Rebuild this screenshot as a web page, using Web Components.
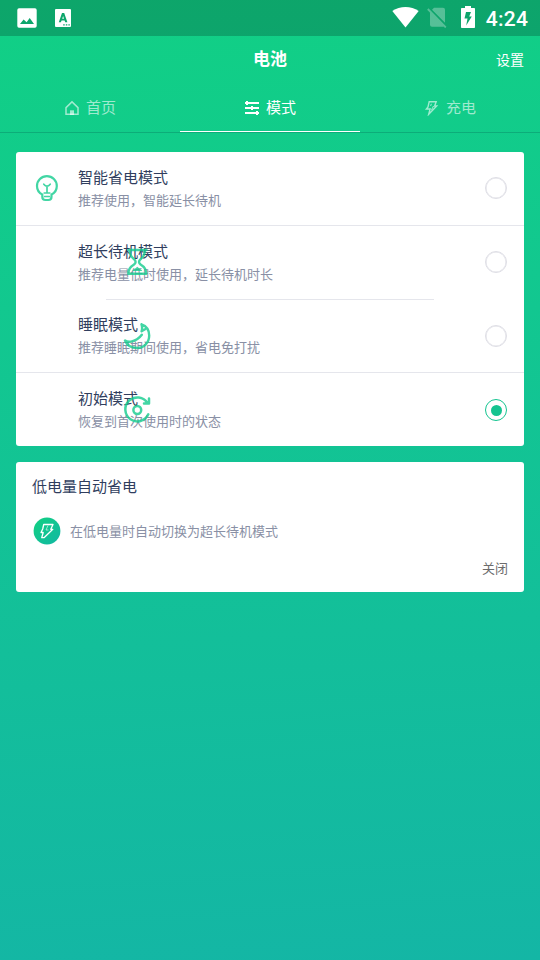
<!DOCTYPE html>
<html lang="zh-CN">
<head>
<meta charset="utf-8">
<title>电池</title>
<style>
html,body{margin:0;height:100%}
body{font-family:Roboto,"Noto Sans CJK SC",sans-serif;overflow:hidden}
</style>
</head>
<body>
<battery-app></battery-app>
<script>
const define = (name, html, setup) => customElements.define(name, class extends HTMLElement {
  static observedAttributes = ['name'];
  constructor() {
    super();
    const t = document.createElement('template');
    t.innerHTML = html;
    this.attachShadow({mode: 'open'}).append(t.content.cloneNode(true));
  }
  connectedCallback() { if (setup) setup(this, this.shadowRoot); }
  attributeChangedCallback() { if (setup) setup(this, this.shadowRoot); }
});

const stroke = (body, w = 2.4) => `<g fill="none" stroke="currentColor" stroke-width="${w}" stroke-linejoin="round" stroke-linecap="round">${body}</g>`;
const icons = {
  picture: [20, 20, '<path fill="currentColor" fill-rule="evenodd" d="M2 .3h16a1.8 1.8 0 0 1 1.700 1.700v16a1.800 1.800 0 0 1-1.700 1.700H2A1.800 1.800 0 0 1 .3 18V2A1.800 1.800 0 0 1 2 .3zM3 16h14l-4.300-6-3.100 4.200-3-2.700z"/>'],
  letter: [16, 18, '<path fill="currentColor" fill-rule="evenodd" d="M1 0h14a1 1 0 0 1 1 1v16a1 1 0 0 1-1 1H1a1 1 0 0 1-1-1V1a1 1 0 0 1 1-1zM3.800 13.300h2.100l.7-1.800h3l.7 1.800h2.100L9.200 4H7zM7.200 9.700 8.100 7 9 9.700zM8.200 15.300v1.300h1.500v-1.300zm2.600 0v1.300h1.500v-1.300zm2.600 0v1.300h1.400v-1.300z"/>'],
  wifi: [27, 21, '<path fill="currentColor" d="M.3 4C8-1.300 19-1.300 26.700 4L13.500 20.500z"/>'],
  nosim: [20, 21, '<g opacity=".3"><path fill="#fff" d="M7 .8h9a2 2 0 0 1 2 2v13L5 2.800zM3 4.800l14 14.500a2 2 0 0 1-1 .5H5a2 2 0 0 1-2-2z"/><path d="M.8 2 18.800 20.500" stroke="#fff" stroke-width="1.800"/></g>'],
  battery: [14, 22, '<path fill="currentColor" fill-rule="evenodd" d="M4 0h6v2h3.200q.8 0 .8.800v18.400q0 .8-.8.800H.8q-.8 0-.8-.8V2.800q0-.8.8-.8H4zM5 6 3.500 12.500h3L5.200 19.500 10.800 10.500H8.200L10 6z"/>'],
  home: [16, 16, '<path d="M2 14.300V7.600L8 1.900l6 5.700v6.700z" fill="none" stroke="currentColor" stroke-width="1.500"/><path d="M6 15v-4.700h4V15z" fill="currentColor"/>'],
  sliders: [16, 16, '<path d="M1 3h14M1 8h14M1 13h14" fill="none" stroke="currentColor" stroke-width="1.800"/><path d="M3 .9v4.200M8 5.900v4.200M13 10.900v4.200" stroke="currentColor" stroke-width="2"/>'],
  bolt: [16, 16, '<path d="M5.200 1.700h7L10.600 6h2.100L4.700 14.300 6.100 9H2.400L4 7z" fill="none" stroke="currentColor" stroke-width="1.400"/><path d="M7.400 3.800 6.600 6M9.500 6 7.500 10" stroke="currentColor" stroke-width="1"/>'],
  bulb: [32, 32, stroke('<path d="M11.300 22.500C7.800 20.800 6 17.800 6 14a9.900 9.900 0 0 1 19.800 0c0 3.800-1.800 6.800-5.300 8.500v2.200q0 3.300-3.200 3.300h-2.800q-3.200 0-3.200-3.300z"/><path d="M12.800 12.200q3.200 3.800 6.400 0M16 15v5.500M13.200 21h5.600M13.600 24.500h4.800" stroke-width="1.700"/>', 2.200)],
  hourglass: [32, 32, stroke('<path d="M7.500 4h18M8.700 4.500C8.700 8.500 9.800 10.800 13 13.200q3.200 2.800 0 5.300C8.800 21 7.300 23.500 7.300 27.800h18c0-4.300-1.500-6.800-5.700-9.300q-3.200-2.500 0-5.300C22.800 10.800 23.900 8.500 23.900 4.500"/>') + '<path fill="currentColor" d="M11.300 25c1-2.200 3-2 5-4.300 2 2.300 4 2.100 5 4.300z"/>'],
  moon: [32, 32, stroke('<path d="M20.500 4.300C25.500 6 28.200 10.500 28.200 15.500 28.200 22.500 23 28 16.200 28 10.500 28 6 25.500 4 20.500q2.500 1.800 6 1.100c5-.8 8-3 10.800-6.800M20.500 4.300q1.200 3.500.1 7l3.400-2"/>', 2.400)],
  reset: [32, 32, stroke('<path d="M27.300 20.300A12 12 0 1 1 26.500 9M28 4.500V9.600h-5"/><circle cx="16.300" cy="16" r="3.900"/>', 2.500)],
  boltbadge: [28, 28, '<defs><linearGradient id="g" x2="1" y2="1"><stop stop-color="#12d181"/><stop offset="1" stop-color="#12b7a4"/></linearGradient></defs><circle cx="14" cy="14" r="13.400" fill="url(#g)"/><path d="M10.700 7.500h9.300L17.800 12.300h2L11 20.700H8.700l1.500-5.200H8l1.700-3.500z" fill="none" stroke="#fff" stroke-width="1.300" stroke-linejoin="round"/><path d="M15 8.500 13 13h2.500" fill="none" stroke="#fff" stroke-width=".8" opacity=".7"/>']
};

define('ui-icon', '<style>:host{display:block;flex:none}svg{display:block}</style><div></div>', (el, root) => {
  if (!el.hasAttribute('name')) return;
  const [w, h, body] = icons[el.getAttribute('name')];
  root.querySelector('div').innerHTML = `<svg width="${w}" height="${h}" viewBox="0 0 ${w} ${h}">${body}</svg>`;
});

define('status-bar', `<style>
:host{display:flex;align-items:center;height:36px;box-sizing:border-box;padding:0 12px 0 17px;background:rgba(0,0,0,.2);color:#fff}
.left{display:flex;align-items:center;gap:18px;flex:1}
.right{display:flex;align-items:center}
ui-icon[name="wifi"],.sim{margin-top:-1px}
.sim{margin-left:8px}.bat{margin:-2px 11px 0 14px}
time{font:500 21px/36px Roboto,sans-serif;letter-spacing:.3px;padding-top:1px;margin-right:-.3px}
</style><div class="left"><ui-icon name="picture"></ui-icon><ui-icon name="letter"></ui-icon></div>
<div class="right"><ui-icon name="wifi"></ui-icon><ui-icon class="sim" name="nosim"></ui-icon><ui-icon class="bat" name="battery"></ui-icon><time>4:24</time></div>`);

define('title-bar', `<style>
:host{display:grid;grid-template-columns:1fr auto 1fr;align-items:center;height:48px;padding:0 16px;color:#fff}
h1{grid-column:2;margin:0 0 2px;font-size:17px;line-height:24px;font-weight:700}
span{justify-self:end;font-size:14px;line-height:24px}
</style><h1><slot></slot></h1><span><slot name="action"></slot></span>`);

define('nav-tab', `<style>
:host{display:flex;flex:1;align-items:center;justify-content:center;gap:6px;height:47px;color:rgba(255,255,255,.6);font-size:15px;line-height:22px;border-bottom:1px solid transparent;box-sizing:content-box}
:host([active]){color:#fff;border-color:#fff}
</style><ui-icon></ui-icon><span><slot></slot></span>`, (el, root) => root.querySelector('ui-icon').setAttribute('name', el.getAttribute('icon')));

define('tab-bar', `<style>:host{display:flex;height:48px;border-bottom:1px solid rgba(0,80,70,.25)}</style><slot></slot>`);

define('white-card', `<style>:host{display:block;background:#fff;border-radius:3px;margin:0 16px}</style><slot></slot>`);

define('mode-row', `<style>
:host{display:grid;grid-template-columns:62px 1fr 22px;align-items:start;height:74px;padding-right:17px;box-sizing:border-box;position:relative;background:linear-gradient(#e5e6ec,#e5e6ec) bottom/100% 1px no-repeat}
:host([line="inset"]){background-size:328px 1px}
:host([line="none"]){background:none}
:host([compact]){height:73px}
.icon{grid-column:1;grid-row:1;color:#14cc8e;opacity:.8;margin:20px 0 0 15px}
:host([overlap]) .icon{position:absolute;left:105px;top:20px;margin:0}
.text{grid-column:2;grid-row:1;min-width:0;padding-top:15px}
:host([compact]:not([checked])) .text{padding-top:14px}
b{display:block;font-weight:400;font-size:15px;line-height:22px;color:#303e5e}
p{margin:2px 0 0;font-size:13px;line-height:20px;color:#8990a5}
i{grid-column:3;grid-row:1;margin-top:25px;display:grid;place-items:center;width:22px;height:22px;box-sizing:border-box;border:1.500px solid #dedee5;border-radius:50%;box-shadow:inset 0 0 0 .5px #dedee5}
:host([checked]) i{border-color:#14c490;margin-top:26px;box-shadow:none}
:host([overlap][checked]) .icon{top:21px}
:host([checked]) i::after{content:"";width:11px;height:11px;border-radius:50%;background:#14c490}
</style><div class="text"><b></b><p><slot></slot></p></div><i></i><ui-icon class="icon"></ui-icon>`, (el, root) => {
  root.querySelector('b').textContent = el.getAttribute('heading');
  root.querySelector('ui-icon').setAttribute('name', el.getAttribute('icon'));
});

define('auto-save', `<style>
:host{display:block;height:130px;box-sizing:border-box;padding:14px 16px 0}
h2{margin:0;font-size:15px;line-height:22px;font-weight:400;color:#303e5e}
.line{display:flex;align-items:center;gap:9px;height:28px;margin:19px 0 0 1px;font-size:13px;line-height:20px;color:#8990a5}
.line span{padding-top:2px}
.state{font-size:13px;line-height:20px;margin-top:14px;text-align:right;color:#6c6c6c}
</style><h2><slot name="heading"></slot></h2><div class="line"><ui-icon name="boltbadge"></ui-icon><span><slot></slot></span></div><div class="state"><slot name="state"></slot></div>`);

define('battery-app', `<style>
:host{display:block;width:540px;height:960px;background:linear-gradient(176deg,#11d085,#14b6a5)}
main{display:grid;gap:16px;padding-top:19px}
</style>
<status-bar></status-bar>
<title-bar>电池<span slot="action">设置</span></title-bar>
<tab-bar><nav-tab icon="home">首页</nav-tab><nav-tab icon="sliders" active>模式</nav-tab><nav-tab icon="bolt">充电</nav-tab></tab-bar>
<main>
<white-card>
<mode-row icon="bulb" heading="智能省电模式">推荐使用，智能延长待机</mode-row>
<mode-row icon="hourglass" heading="超长待机模式" overlap line="inset">推荐电量低时使用，延长待机时长</mode-row>
<mode-row icon="moon" heading="睡眠模式" overlap compact>推荐睡眠期间使用，省电免打扰</mode-row>
<mode-row icon="reset" heading="初始模式" overlap compact checked line="none">恢复到首次使用时的状态</mode-row>
</white-card>
<white-card><auto-save><span slot="heading">低电量自动省电</span>在低电量时自动切换为超长待机模式<span slot="state">关闭</span></auto-save></white-card>
</main>`);
</script>
</body>
</html>
